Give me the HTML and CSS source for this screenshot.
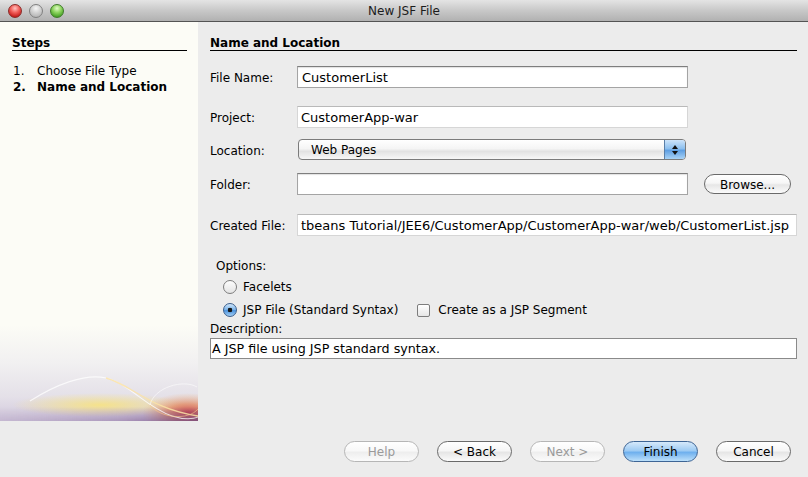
FILE: index.html
```html
<!DOCTYPE html>
<html>
<head>
<meta charset="utf-8">
<title>New JSF File</title>
<link rel="stylesheet" href="styles.css">
</head>
<body>
<div class="window">
  <header class="titlebar">
    <div class="lights">
      <span class="light red"></span>
      <span class="light gray"></span>
      <span class="light green"></span>
    </div>
    <div class="title">New JSF File</div>
    <div></div>
  </header>
  <div class="main">
    <aside class="steps">
      <h2 class="section-title steps-title">Steps</h2>
      <ol class="step-list">
        <li><span class="num">1.</span>Choose File Type</li>
        <li class="current"><span class="num">2.</span>Name and Location</li>
      </ol>
      <svg class="art" viewBox="0 0 198 96" preserveAspectRatio="none">
        <defs>
          <linearGradient id="bg" x1="0" y1="0" x2="0" y2="1">
            <stop offset="0" stop-color="#fcfcf6"/>
            <stop offset=".4" stop-color="#f1f0f1"/>
            <stop offset=".75" stop-color="#e4e0e8"/>
            <stop offset="1" stop-color="#d2c8dc"/>
          </linearGradient>
          <radialGradient id="yel" cx=".5" cy=".5" r=".5">
            <stop offset="0" stop-color="#f6e286" stop-opacity=".95"/>
            <stop offset="1" stop-color="#f6e286" stop-opacity="0"/>
          </radialGradient>
          <radialGradient id="org" cx=".5" cy=".5" r=".5">
            <stop offset="0" stop-color="#c8323a" stop-opacity=".9"/>
            <stop offset=".45" stop-color="#e47a48" stop-opacity=".65"/>
            <stop offset="1" stop-color="#f0b070" stop-opacity="0"/>
          </radialGradient>
          <linearGradient id="pur" x1="0" y1="0" x2="1" y2="0">
            <stop offset="0" stop-color="#9b86b0" stop-opacity=".25"/>
            <stop offset=".6" stop-color="#7b5b93" stop-opacity=".45"/>
            <stop offset="1" stop-color="#6a3f7a" stop-opacity=".8"/>
          </linearGradient>
          <linearGradient id="fade" x1="0" y1="0" x2="0" y2="1">
            <stop offset="0" stop-color="#fff" stop-opacity="1"/>
            <stop offset="1" stop-color="#fff" stop-opacity="0"/>
          </linearGradient>
          <mask id="band">
            <rect y="82" width="198" height="14" fill="url(#fade)" transform="rotate(180 99 89)"/>
          </mask>
        </defs>
        <rect width="198" height="96" fill="url(#bg)"/>
        <ellipse cx="100" cy="80" rx="88" ry="12" fill="url(#yel)"/>
        <ellipse cx="188" cy="88" rx="46" ry="20" fill="url(#org)"/>
        <rect y="82" width="198" height="14" fill="url(#pur)" mask="url(#band)"/>
        <path d="M30 76 C 55 60, 85 48, 106 53 C 128 58, 146 82, 172 91 C 184 95, 194 94, 198 92" fill="none" stroke="#ffffff" stroke-width="1.1" opacity=".75"/>
        <path d="M106 53 C 132 60, 150 84, 198 91" fill="none" stroke="#fbe3a6" stroke-width="1.3" opacity=".85"/>
        <path d="M150 80 C 154 62, 184 54, 197 62" fill="none" stroke="#ffffff" stroke-width="1" opacity=".55"/>
        <path d="M150 80 C 160 93, 188 96, 198 84" fill="none" stroke="#f7c88a" stroke-width="1" opacity=".6"/>
      </svg>
    </aside>
    <section class="content">
      <h2 class="section-title">Name and Location</h2>
      <div class="row row-name">
        <label>File Name:</label>
        <div class="field">CustomerList</div>
      </div>
      <div class="row row-project">
        <label>Project:</label>
        <div class="field ro">CustomerApp-war</div>
      </div>
      <div class="row row-location">
        <label>Location:</label>
        <div class="select">
          <span class="select-text">Web Pages</span>
          <span class="stepper"><i class="up"></i><i class="down"></i></span>
        </div>
      </div>
      <div class="row row-folder">
        <label>Folder:</label>
        <div class="field"></div>
        <button class="btn browse">Browse...</button>
      </div>
      <div class="row row-created">
        <label>Created File:</label>
        <div class="field ro wide">tbeans Tutorial/JEE6/CustomerApp/CustomerApp-war/web/CustomerList.jsp</div>
      </div>
      <div class="options">
        <div class="options-label">Options:</div>
        <div class="radio-row facelets"><span class="radio"></span>Facelets</div>
        <div class="radio-row jsp"><span class="radio on"></span>JSP File (Standard Syntax)<span class="check"></span>Create as a JSP Segment</div>
      </div>
      <div class="desc-label">Description:</div>
      <div class="desc">A JSP file using JSP standard syntax.</div>
    </section>
  </div>
  <footer class="buttons">
    <button class="btn disabled">Help</button>
    <button class="btn">&lt; Back</button>
    <button class="btn disabled">Next &gt;</button>
    <button class="btn primary">Finish</button>
    <button class="btn">Cancel</button>
  </footer>
</div>
</body>
</html>
```

FILE: styles.css
```css
html, body {
  margin: 0;
  padding: 0;
}
body {
  font-family: "DejaVu Sans", "Lucida Grande", sans-serif;
  font-size: 12px;
  color: #000;
  background: #ececec;
}
.window {
  width: 808px;
  height: 477px;
  display: flex;
  flex-direction: column;
  overflow: hidden;
}
.titlebar {
  height: 21px;
  flex: none;
  border-bottom: 1px solid #545454;
  background: linear-gradient(#e4e4e4, #c8c8c8 50%, #b1b1b1);
  display: grid;
  grid-template-columns: 1fr auto 1fr;
  align-items: center;
}
.lights {
  display: flex;
  gap: 7px;
  padding-left: 8px;
}
.light {
  width: 14px;
  height: 14px;
  border-radius: 50%;
  box-sizing: border-box;
}
.red {
  background: radial-gradient(circle at 50% 28%, #ffc2bf 0, #f2615c 40%, #c41d1b 80%, #9c1010 100%);
  border: 1px solid #8a2b28;
}
.gray {
  background: radial-gradient(circle at 50% 28%, #f6f6f6 0, #d0d0d0 45%, #a8a8a8 100%);
  border: 1px solid #808080;
}
.green {
  background: radial-gradient(circle at 50% 28%, #e2fbc8 0, #8ed560 40%, #47a025 80%, #2f7a15 100%);
  border: 1px solid #3f7a2a;
}
.title {
  color: #1c1c1c;
  line-height: 22px;
}
.main {
  display: flex;
  height: 399px;
  flex: none;
}
.steps {
  width: 198px;
  flex: none;
  background: #fcfcf6;
  display: flex;
  flex-direction: column;
}
.section-title {
  margin: 14px 0 0;
  font-size: 12px;
  font-weight: bold;
  line-height: 14px;
  border-bottom: 1px solid #000;
}
.steps-title {
  margin: 14px 11px 0 12px;
}
.step-list {
  list-style: none;
  margin: 12px 0 0 13px;
  padding: 0;
  line-height: 16px;
}
.num {
  display: inline-block;
  width: 24px;
}
.current {
  font-weight: bold;
}
.art {
  margin-top: auto;
  display: block;
  width: 198px;
  height: 96px;
}
.content {
  flex: 1;
  padding: 0 11px 0 12px;
  background: #ececec;
}
.row {
  display: flex;
  align-items: center;
}
.row label {
  width: 87px;
  flex: none;
  padding-top: 2px;
}
.field {
  box-sizing: border-box;
  height: 22px;
  width: 391px;
  background: #fff;
  border: 1px solid #a4a4a4;
  border-top-color: #7e7e7e;
  padding: 0 4px;
  font-size: 13px;
  line-height: 21px;
  white-space: nowrap;
  overflow: hidden;
  box-shadow: inset 0 1px 1px rgba(0, 0, 0, 0.12);
}
.field.ro {
  border-color: #d6d6d6;
  border-top-color: #b9b9b9;
  box-shadow: none;
  padding-left: 3px;
}
.field.wide {
  width: 500px;
}
.row-name { margin-top: 15px; }
.row-project { margin-top: 18px; }
.row-location { margin-top: 11px; }
.row-folder { margin-top: 13px; }
.row-created { margin-top: 19px; }
.select {
  width: 388px;
  height: 21px;
  margin-left: 1px;
  box-sizing: border-box;
  border: 1px solid #7b7b7b;
  border-radius: 4px;
  background: linear-gradient(#ffffff, #f5f5f5 45%, #e2e2e2 60%, #f7f7f7);
  display: flex;
  align-items: stretch;
  overflow: hidden;
}
.select-text {
  flex: 1;
  padding-left: 12px;
  line-height: 21px;
}
.stepper {
  width: 20px;
  background: linear-gradient(#cde4fa, #8dc0ef 45%, #5f9fe2 55%, #a9d3f6);
  border-left: 1px solid #5a7fa8;
  display: flex;
  flex-direction: column;
  align-items: center;
  justify-content: center;
  gap: 2px;
}
.stepper i {
  display: block;
  width: 0;
  height: 0;
  border-left: 3px solid transparent;
  border-right: 3px solid transparent;
}
.stepper .up { border-bottom: 4px solid #111; }
.stepper .down { border-top: 4px solid #111; }
.btn {
  width: 75px;
  height: 21px;
  padding: 1px 0 0;
  box-sizing: border-box;
  border: 1px solid #6a6a6a;
  border-radius: 11px;
  background: linear-gradient(#ffffff, #f6f6f6 45%, #e6e6e6 55%, #fbfbfb);
  display: flex;
  align-items: center;
  justify-content: center;
  font-family: inherit;
  font-size: 12px;
  color: #000;
  flex: none;
}
.btn.browse {
  width: 87px;
  height: 20px;
  margin-left: 16px;
  border-radius: 10px;
}
.btn.disabled {
  color: #9a9a9a;
  border-color: #b6b6b6;
  background: linear-gradient(#ffffff, #f8f8f8 45%, #eeeeee 55%, #fbfbfb);
}
.btn.primary {
  background: linear-gradient(#d6e9fb, #9ecbf3 45%, #6fb0ee 55%, #bde0fa);
  border-color: #3e6595;
}
.options {
  margin-top: 22px;
}
.options-label {
  padding-left: 6px;
  line-height: 16px;
}
.radio-row {
  display: flex;
  align-items: center;
  height: 18px;
  padding-left: 13px;
}
.facelets { margin-top: 4px; }
.jsp { margin-top: 5px; }
.radio {
  width: 14px;
  height: 14px;
  border-radius: 50%;
  border: 1px solid #7d7d7d;
  background: linear-gradient(#fdfdfd, #e4e4e4);
  box-sizing: border-box;
  margin-right: 6px;
  flex: none;
}
.radio.on {
  background: radial-gradient(circle, #161616 0, #161616 2px, transparent 2.6px), linear-gradient(#d3e8fb, #79b3ea 48%, #4d93dd 55%, #a2cef4);
  border-color: #3b5e8c;
}
.check {
  width: 13px;
  height: 13px;
  border: 1px solid #7d7d7d;
  border-radius: 2px;
  background: linear-gradient(#ffffff, #e6e6e6);
  box-sizing: border-box;
  margin: 0 8px 0 19px;
  flex: none;
}
.desc-label {
  margin-top: 2px;
  line-height: 16px;
}
.desc {
  margin-top: 1px;
  height: 21px;
  box-sizing: border-box;
  border: 1px solid #8a8a8a;
  background: #fff;
  padding: 0 1px;
  font-size: 12.7px;
  line-height: 20px;
  white-space: nowrap;
  overflow: hidden;
}
.buttons {
  height: 56px;
  flex: none;
  display: flex;
  justify-content: flex-end;
  gap: 18px;
  padding: 20px 17px 0 0;
  box-sizing: border-box;
  background: #ececec;
}
```
